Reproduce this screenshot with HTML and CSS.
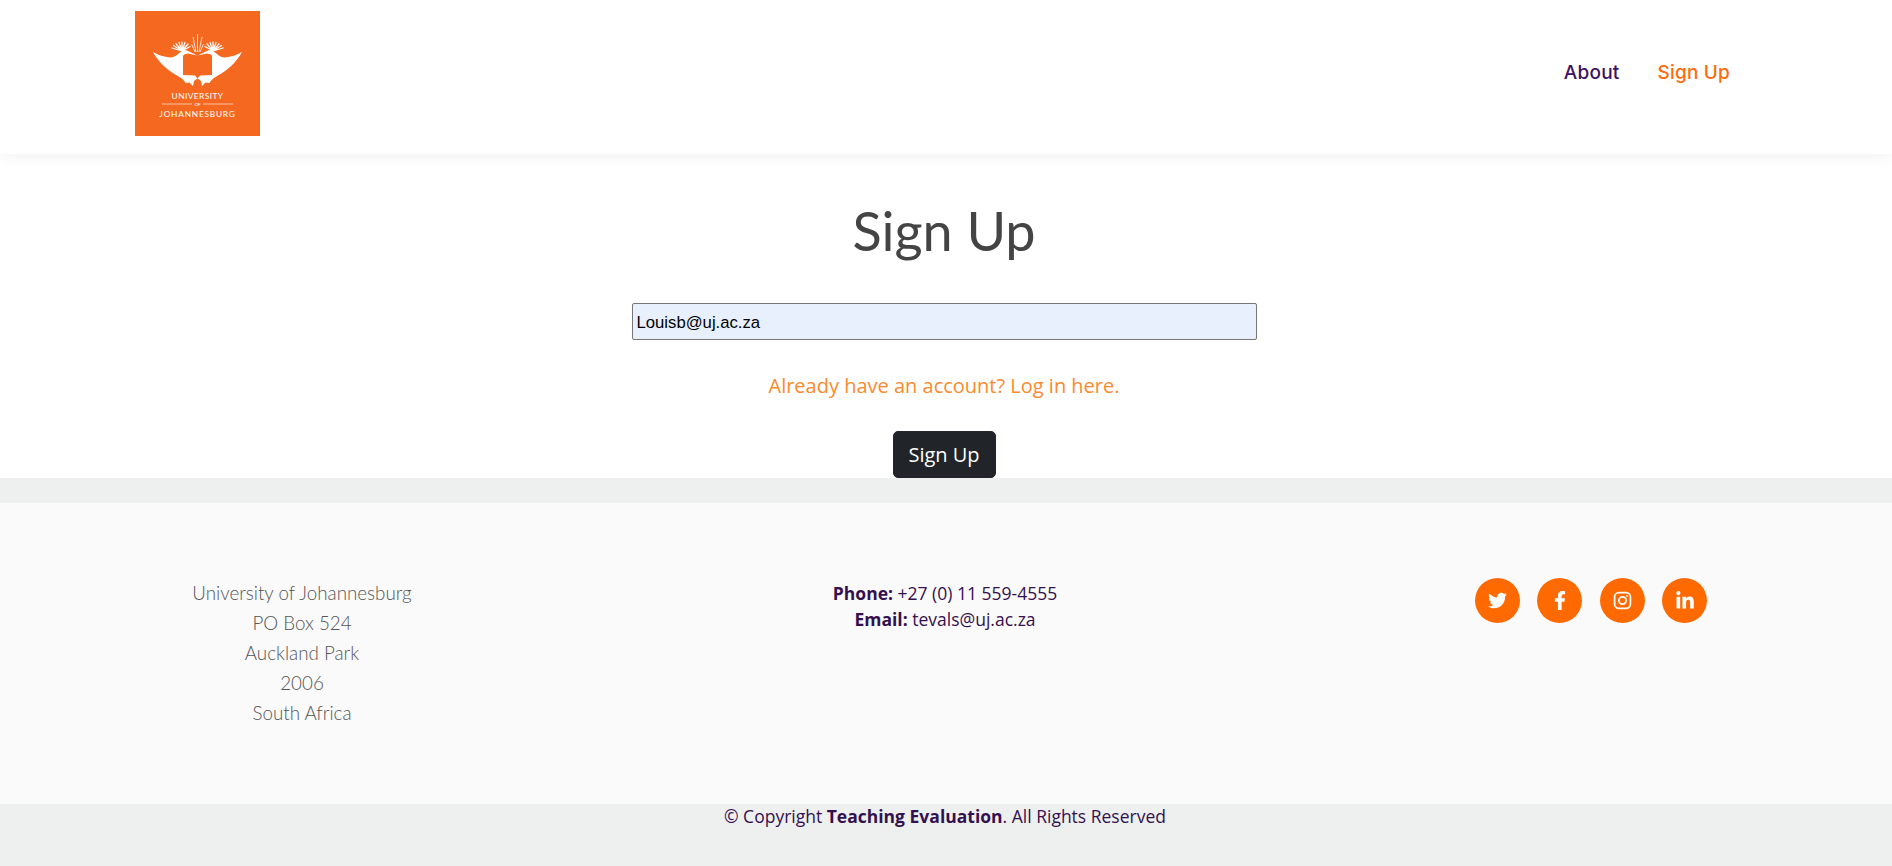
FILE: index.html
```html
<!DOCTYPE html>
<html lang="en">
<head>
<meta charset="utf-8">
<title>Sign Up</title>
<link rel="stylesheet" href="styles.css">
</head>
<body>
<header class="site-header">
  <a class="logo" href="#">
    <svg viewBox="0 0 125 125" width="125" height="125" role="img" aria-label="University of Johannesburg">
      <rect width="125" height="125" fill="#f4691f"/>
      <g fill="#fff">
        <path d="M18 41C23 44 29 46 35 46.500C38 46.500 41 45 43 43C44 42 45.500 41 47 40.500L44 37.500L52 39.500L62.500 44.500L53 42.500L49 43.500L48 45V64L60 64.500L62.500 67.500L59 70L58 75L54.500 71.500L50.500 72C49.500 69 46 67 42 64.500C33 59.500 24 52 18 41Z"/>
        <path d="M47 40L37 37M47 40L38.500 34.500M47 40L41 32.800M47 40L44 31.500M47 40L47 31M47 40L50 31.500M47 40L53 33M47 40L55 35.500" stroke="#fff" stroke-width="1.300" fill="none" stroke-linecap="round"/>
      </g>
      <g fill="#fff" transform="matrix(-1 0 0 1 125 0)">
        <path d="M18 41C23 44 29 46 35 46.500C38 46.500 41 45 43 43C44 42 45.500 41 47 40.500L44 37.500L52 39.500L62.500 44.500L53 42.500L49 43.500L48 45V64L60 64.500L62.500 67.500L59 70L58 75L54.500 71.500L50.500 72C49.500 69 46 67 42 64.500C33 59.500 24 52 18 41Z"/>
        <path d="M47 40L37 37M47 40L38.500 34.500M47 40L41 32.800M47 40L44 31.500M47 40L47 31M47 40L50 31.500M47 40L53 33M47 40L55 35.500" stroke="#fff" stroke-width="1.300" fill="none" stroke-linecap="round"/>
      </g>
      <path d="M62.500 41V23M61 41L58 26M64 41L67 26M60 41L56.500 33M65 41L68.500 33" stroke="#fff" stroke-width=".8" fill="none"/>
      <path d="M27 93H57M68 93H98" stroke="#fff" stroke-width=".6"/>
      <text class="logo-text" x="62.500" y="88" text-anchor="middle">UNIVERSITY</text>
      <text class="logo-of" x="62.500" y="95" text-anchor="middle">OF</text>
      <text class="logo-text logo-wide" x="62.500" y="105.500" text-anchor="middle">JOHANNESBURG</text>
    </svg>
  </a>
  <nav class="nav">
    <a class="nav-link" href="#">About</a>
    <a class="nav-link active" href="#">Sign Up</a>
  </nav>
</header>

<main class="signup">
  <h1 class="title">Sign Up</h1>
  <input class="email" type="text" value="Louisb@uj.ac.za" aria-label="Email">
  <a class="login-link" href="#">Already have an account? Log in here.</a>
  <button class="submit" type="button">Sign Up</button>
</main>

<footer class="footer">
  <div class="footer-top">
    <address class="addr">
      <span>University of Johannesburg</span>
      <span>PO Box 524</span>
      <span>Auckland Park</span>
      <span>2006</span>
      <span>South Africa</span>
    </address>
    <div class="contact">
      <p><strong>Phone:</strong> +27 (0) 11 559-4555</p>
      <p><strong>Email:</strong> tevals@uj.ac.za</p>
    </div>
    <div class="social">
      <a class="social-btn" href="#" aria-label="Twitter">
        <svg viewBox="0 0 512 512" width="19" height="19"><path fill="#fff" d="M459.400 151.700c.3 4.500.3 9.100.3 13.600 0 138.700-105.600 298.600-298.600 298.600-59.500 0-114.700-17.200-161.100-47.100 8.400 1 16.600 1.300 25.300 1.300 49.100 0 94.200-16.600 130.300-44.800-46.100-1-84.800-31.200-98.100-72.800 6.500 1 13 1.600 19.800 1.600 9.400 0 18.800-1.300 27.600-3.600-48.100-9.700-84.100-52-84.100-103v-1.300c14 7.800 30.200 12.700 47.400 13.300-28.300-18.800-46.800-51-46.800-87.400 0-19.500 5.200-37.400 14.300-53 51.700 63.700 129.300 105.300 216.400 109.800-1.600-7.800-2.600-15.900-2.600-24 0-57.800 46.800-104.900 104.900-104.900 30.200 0 57.500 12.700 76.700 33.100 23.700-4.500 46.500-13.300 66.600-25.300-7.800 24-24.300 44.200-46.100 57.200 21.100-2.300 41.600-8.100 60.400-16.200-14.300 20.800-32.200 39.300-52.600 54.300z"/></svg>
      </a>
      <a class="social-btn" href="#" aria-label="Facebook">
        <svg viewBox="0 0 320 512" width="12" height="19"><path fill="#fff" d="M279.100 288l14.200-92.700h-88.900v-60.100c0-25.300 12.400-50.100 52.200-50.100h40.400V6.300S260.400 0 225.400 0c-73.200 0-121.100 44.400-121.100 124.700v70.600H22.900V288h81.400v224h100.200V288z"/></svg>
      </a>
      <a class="social-btn" href="#" aria-label="Instagram">
        <svg viewBox="0 0 24 24" width="19" height="19" fill="none" stroke="#fff" stroke-width="2.200"><rect x="2" y="2" width="20" height="20" rx="5.500"/><circle cx="12" cy="12" r="4.600"/><circle cx="17.800" cy="6.200" r="1.200" fill="#fff" stroke="none"/></svg>
      </a>
      <a class="social-btn" href="#" aria-label="LinkedIn">
        <svg viewBox="0 0 448 512" width="18" height="20"><path fill="#fff" d="M100.300 448H7.400V148.900h92.900zM53.800 108.100C24.100 108.100 0 83.500 0 53.800a53.800 53.800 0 0 1 107.600 0c0 29.700-24.100 54.300-53.800 54.300zM447.900 448h-92.700V302.400c0-34.700-.7-79.200-48.300-79.200-48.300 0-55.700 37.700-55.700 76.700V448h-92.800V148.900h89.100v40.800h1.300c12.400-23.500 42.700-48.300 87.900-48.300 94 0 111.300 61.900 111.300 142.300V448z"/></svg>
      </a>
    </div>
  </div>
  <div class="copyright">© Copyright <strong>Teaching Evaluation</strong>. All Rights Reserved</div>
</footer>
</body>
</html>
```
FILE: styles.css
```css
* { box-sizing: border-box; }
html, body { margin: 0; height: 100%; }
body {
  width: 1892px;
  height: 866px;
  overflow: hidden;
  background: #fff;
  font-family: "Open Sans", sans-serif;
  display: flex;
  flex-direction: column;
}
a { text-decoration: none; }

.site-header {
  height: 154px;
  flex: none;
  display: flex;
  justify-content: space-between;
  align-items: flex-start;
  padding: 11px 162px 0 135px;
  background: #fff;
  box-shadow: 0 2px 15px rgba(0, 0, 0, 0.06);
  position: relative;
}
.logo { display: block; width: 125px; height: 125px; }
.logo svg { display: block; }
.logo-text { font: 400 8.300px "Lato", sans-serif; fill: #fff; letter-spacing: .45px; }
.logo-wide { letter-spacing: .8px; }
.logo-of { font: 400 4.500px "Lato", sans-serif; fill: #fff; }

.nav { display: flex; gap: 38px; margin-top: 50px; }
.nav-link { font: 500 19px/24px "Inter", sans-serif; letter-spacing: .2px; color: #3c1361; }
.nav-link.active { color: #ff6a0d; }

.signup {
  height: 324px;
  flex: none;
  display: flex;
  flex-direction: column;
  align-items: center;
  padding-right: 4px;
}
.title {
  margin: 45px 0 0;
  font: 400 54px/64px "Lato", sans-serif;
  color: #444;
}
.email {
  margin-top: 40px;
  width: 625px;
  height: 37px;
  padding: 3px 4px 0;
  background: #e8f0fe;
  border: 1px solid #767676;
  border-radius: 2px;
  font: 16.700px "Liberation Sans", sans-serif;
  color: #000;
  outline: 0;
}
.login-link {
  margin-top: 33px;
  font-size: 20px;
  line-height: 26px;
  color: #fb8a2e;
}
.submit {
  margin-top: 32px;
  width: 103px;
  height: 47px;
  border: 1px solid #212529;
  border-radius: 5px;
  background: #212529;
  color: #fff;
  font: 400 20px/1.500 "Open Sans", sans-serif;
  padding: 0;
}

.footer {
  flex: 1;
  display: flex;
  flex-direction: column;
  background: #eef0ef;
  padding-top: 25px;
}
.footer-top {
  height: 301px;
  flex: none;
  display: grid;
  grid-template-columns: 604px 1fr 604px;
  background: #fafafa;
}
.addr {
  padding-top: 75px;
  display: flex;
  flex-direction: column;
  align-items: center;
  font: 300 18.800px/30px "Lato", sans-serif;
  color: #555;
}
.contact {
  padding: 77px 2px 0 0;
  text-align: center;
  font-size: 17.500px;
  line-height: 26px;
  color: #35104f;
}
.contact p { margin: 0; }
.contact strong { font-weight: 700; }
.social {
  padding: 75px 0 0 2px;
  display: flex;
  justify-content: center;
  align-items: flex-start;
  gap: 17.500px;
}
.social-btn {
  width: 45px;
  height: 45px;
  border-radius: 50%;
  background: #ff6a00;
  display: flex;
  align-items: center;
  justify-content: center;
}
.copyright {
  padding-right: 2px;
  text-align: center;
  font-size: 17.500px;
  line-height: 25px;
  color: #35104f;
}
```
